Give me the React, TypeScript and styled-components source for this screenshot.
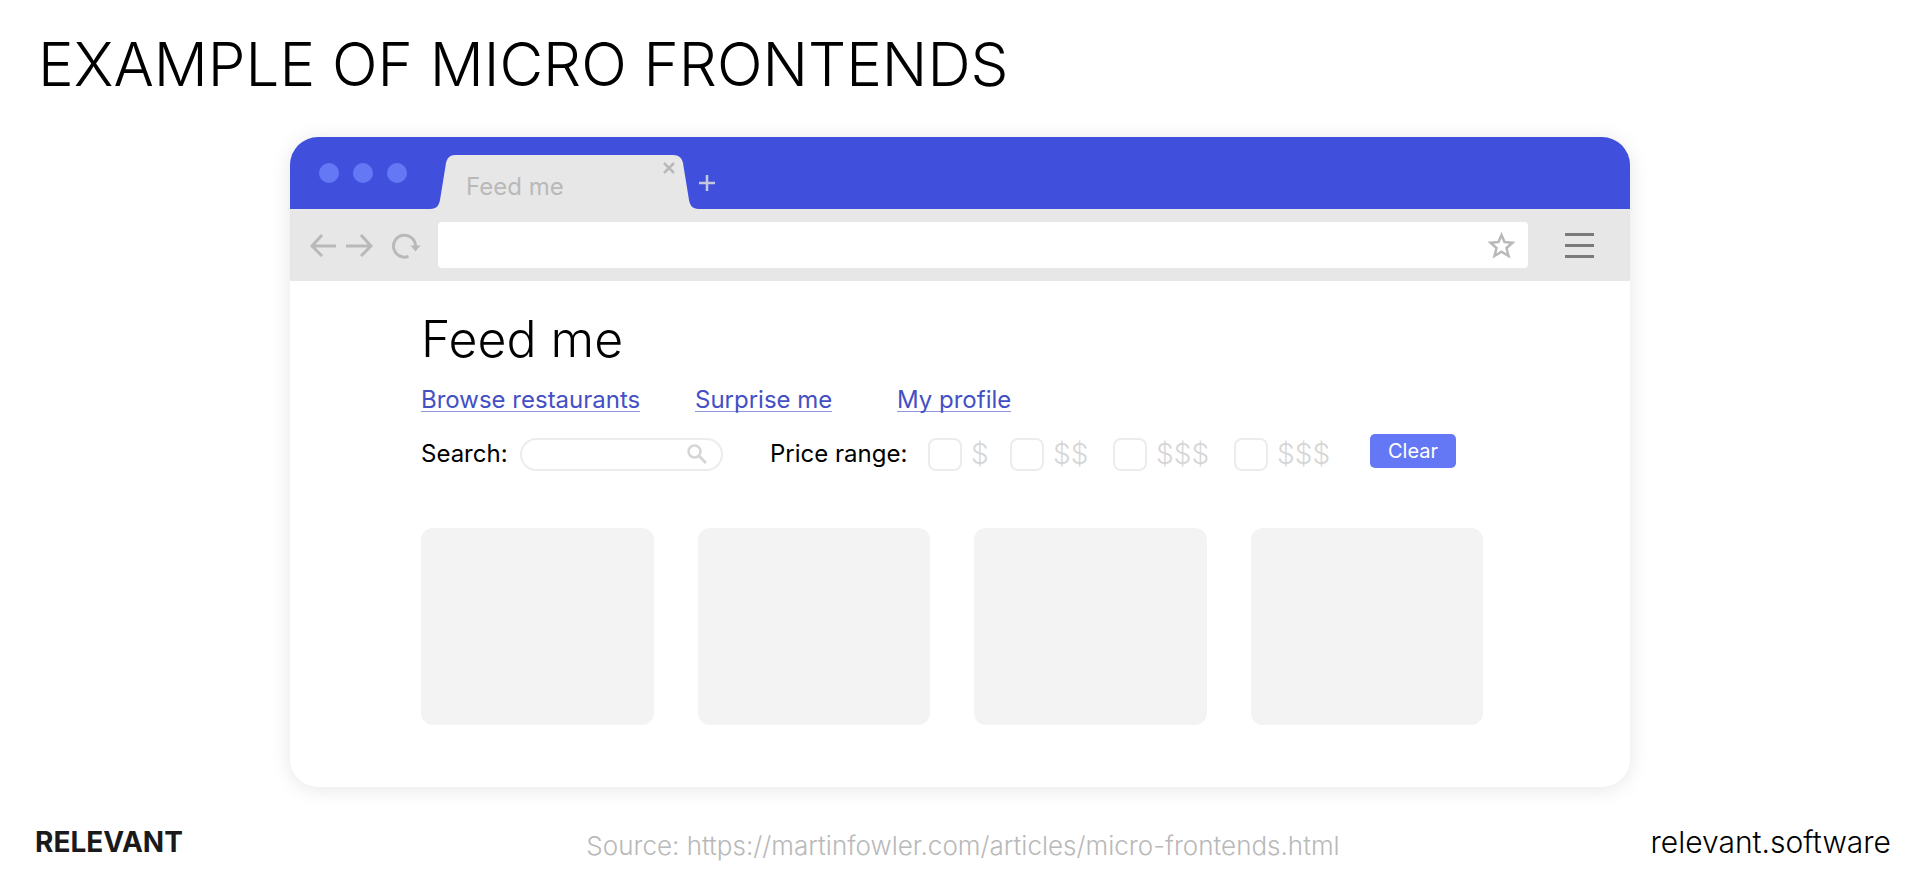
import React from "react";
import styled, { createGlobalStyle } from "styled-components";

const colors = {
  brand: "#404fdc",
  brandLight: "#6478f5",
  chrome: "#e7e7e7",
  muted: "#b9b9b9",
  faint: "#d6d6d6",
  line: "#ececec",
  link: "#4450c4",
  card: "#f3f3f3",
};

const GlobalStyle = createGlobalStyle`
  *, *::before, *::after { box-sizing: border-box; }
  body {
    margin: 0;
    background: #fff;
    color: #000;
    font-family: Inter, "Liberation Sans", sans-serif;
  }
  button, input { font: inherit; margin: 0; }
`;

const Page = styled.div`
  display: flex;
  flex-direction: column;
  min-height: 100vh;
`;

const Title = styled.h1`
  margin: 0;
  padding: 32px 38px 41px;
  font-size: 60px;
  line-height: 64px;
  font-weight: 300;
`;

const Browser = styled.section`
  display: flex;
  flex-direction: column;
  width: calc(100% - 80px);
  max-width: 1340px;
  margin: 0 auto;
  border-radius: 28px;
  background: #fff;
  box-shadow: 0 2px 20px rgba(0, 0, 0, 0.1);
  overflow: hidden;
`;

const TabStrip = styled.div`
  display: flex;
  align-items: flex-end;
  height: 72px;
  padding-left: 29px;
  background: ${colors.brand};
`;

const WindowDots = styled.div`
  display: flex;
  align-self: center;
  gap: 14px;
  margin-right: 23px;
`;

const Dot = styled.span`
  width: 20px;
  height: 20px;
  border-radius: 50%;
  background: ${colors.brandLight};
`;

const Tab = styled.div`
  position: relative;
  display: flex;
  align-items: flex-start;
  justify-content: space-between;
  width: 269px;
  height: 54px;
  padding: 0 20px 0 36px;
`;

const TabShape = styled.svg`
  position: absolute;
  inset: 0;
  fill: ${colors.chrome};
`;

const IconButton = styled.button`
  display: flex;
  flex: none;
  align-items: center;
  justify-content: center;
  padding: 0;
  border: 0;
  background: none;
  color: ${colors.muted};
  position: relative;
  cursor: pointer;

  svg {
    display: block;
    fill: none;
    stroke: currentColor;
  }
`;

const TabLabel = styled(IconButton)`
  height: 62px;
  font-size: 24px;
  font-weight: 400;
`;

const CloseTab = styled(IconButton)`
  width: 20px;
  height: 26px;
`;

const NewTab = styled(IconButton)`
  height: 52px;
  color: #c8c8dc;
`;

const Toolbar = styled.div`
  display: flex;
  align-items: center;
  height: 72px;
  padding: 0 36px 0 19px;
  background: ${colors.chrome};
`;

const NavButtons = styled.div`
  display: flex;
  align-items: center;
  gap: 9px;
  width: 129px;
`;

const AddressBar = styled.div`
  display: flex;
  flex: 1;
  align-items: center;
  height: 46px;
  margin-right: 36px;
  padding-right: 13px;
  border-radius: 4px;
  background: #fff;
`;

const AddressInput = styled.input`
  flex: 1;
  min-width: 0;
  padding: 0 16px;
  border: 0;
  outline: 0;
  background: none;
  font-size: 24px;
`;

const MenuButton = styled(IconButton)`
  color: #7a7a7a;
`;

const Content = styled.main`
  padding: 30px 147px 62px 131px;
`;

const Heading = styled.h2`
  margin: 0;
  font-size: 50px;
  line-height: 56px;
  font-weight: 300;
`;

const Links = styled.nav`
  display: grid;
  grid-template-columns: 274px 202px auto;
  justify-content: start;
  margin-top: 22px;
`;

const NavLink = styled.a`
  justify-self: start;
  border-bottom: 1px solid #8f97dc;
  color: ${colors.link};
  font-size: 24px;
  line-height: 22px;
  font-weight: 400;
  text-decoration: none;
`;

const Filters = styled.form`
  display: flex;
  align-items: center;
  height: 40px;
  margin-top: 22px;
`;

const FilterLabel = styled.label<{ $width: number }>`
  flex: none;
  width: ${(p) => p.$width}px;
  font-size: 24px;
  line-height: 32px;
`;

const SearchBox = styled.div`
  display: flex;
  align-items: center;
  width: 203px;
  height: 33px;
  margin-right: 47px;
  padding-right: 14px;
  border: 2px solid ${colors.line};
  border-radius: 17px;
`;

const SearchInput = styled.input`
  flex: 1;
  min-width: 0;
  padding: 0 12px;
  border: 0;
  outline: 0;
  background: none;
  font-size: 20px;
`;

const PriceGroup = styled.fieldset`
  display: flex;
  align-items: center;
  margin: 0;
  padding: 0;
  border: 0;
`;

const PriceOption = styled.label<{ $width: number }>`
  display: flex;
  align-items: center;
  gap: 9px;
  width: ${(p) => p.$width}px;
  color: ${colors.faint};
  font-size: 28px;
  line-height: 32px;
  font-weight: 300;
`;

const Checkbox = styled.input`
  appearance: none;
  flex: none;
  width: 34px;
  height: 33px;
  border: 2px solid ${colors.line};
  border-radius: 8px;
  background: #fff;

  &:checked {
    background: ${colors.brandLight};
  }
`;

const ClearButton = styled.button`
  align-self: flex-start;
  width: 86px;
  height: 34px;
  padding: 0;
  border: 0;
  border-radius: 5px;
  background: ${colors.brandLight};
  color: #fff;
  font-size: 20px;
  line-height: 32px;
  font-weight: 400;
  cursor: pointer;
`;

const Cards = styled.div`
  display: grid;
  grid-template-columns: repeat(4, 1fr);
  gap: 44px;
  margin-top: 54px;
`;

const Card = styled.article`
  height: 197px;
  border-radius: 12px;
  background: ${colors.card};
`;

const Footer = styled.footer`
  display: grid;
  grid-template-columns: 1fr auto 1fr;
  align-items: center;
  padding: 35px 29px 24px 35px;
`;

const Brand = styled.strong`
  color: #1a1a1a;
  font-size: 28px;
  line-height: 32px;
  font-weight: 700;
`;

const Source = styled.span`
  padding-top: 8px;
  color: ${colors.muted};
  font-size: 26px;
  line-height: 32px;
  font-weight: 300;
`;

const SiteLink = styled.a`
  justify-self: end;
  color: #000;
  font-size: 30px;
  line-height: 32px;
  font-weight: 300;
  text-decoration: none;
`;

const prices = [
  { id: "price-1", label: "$", width: 82 },
  { id: "price-2", label: "$$", width: 103 },
  { id: "price-3", label: "$$$", width: 121 },
  { id: "price-4", label: "$$$", width: 136 },
];

export default function App() {
  return (
    <Page>
      <GlobalStyle />
      <Title>EXAMPLE OF MICRO FRONTENDS</Title>

      <Browser>
        <TabStrip>
          <WindowDots>
            <Dot />
            <Dot />
            <Dot />
          </WindowDots>
          <Tab>
            <TabShape width="269" height="54" viewBox="0 0 269 54" aria-hidden="true">
              <path d="M0 54C7 54 9 50 10 45L16 8C17 3 20 0 25 0H243C249 0 252 3 253 8L259 45C260 50 262 54 269 54Z" />
            </TabShape>
            <TabLabel type="button">Feed me</TabLabel>
            <CloseTab type="button" aria-label="Close tab">
              <svg width="12" height="12" viewBox="0 0 12 12" strokeWidth="2.500">
                <path d="M1 1L11 11M11 1L1 11" />
              </svg>
            </CloseTab>
          </Tab>
          <NewTab type="button" aria-label="New tab">
            <svg width="16" height="16" viewBox="0 0 16 16" strokeWidth="2.500">
              <path d="M8 0V16M0 8H16" />
            </svg>
          </NewTab>
        </TabStrip>

        <Toolbar>
          <NavButtons>
            <IconButton type="button" aria-label="Back">
              <svg width="28" height="24" viewBox="0 0 28 24" strokeWidth="3">
                <path d="M13 2L3 13L13 23M3 13H27" />
              </svg>
            </IconButton>
            <IconButton type="button" aria-label="Forward">
              <svg width="28" height="24" viewBox="0 0 28 24" strokeWidth="3">
                <path d="M15 2L25 13L15 23M25 13H0" />
              </svg>
            </IconButton>
            <IconButton type="button" aria-label="Reload">
              <svg width="42" height="28" viewBox="1 0 42 28" strokeWidth="3">
                <path d="M26.500 25.400A11 11 0 1 1 33.500 15" />
                <path d="M28.500 14.500H38.500L33.500 20.500Z" fill="currentColor" stroke="none" />
              </svg>
            </IconButton>
          </NavButtons>
          <AddressBar>
            <AddressInput type="text" aria-label="Address" />
            <IconButton type="button" aria-label="Bookmark">
              <svg width="28" height="28" viewBox="0 0 28 28" strokeWidth="2.500">
                <path d="M14.500 4L17.500 11L25.500 11.700L19.500 17L21.500 25L14.500 20.800L7.500 25L9.500 17L3.500 11.700L11.500 11Z" />
              </svg>
            </IconButton>
          </AddressBar>
          <MenuButton type="button" aria-label="Menu">
            <svg width="30" height="28" viewBox="0 0 30 28" strokeWidth="3">
              <path d="M1 3.500H30M1 14.500H30M1 25.500H30" />
            </svg>
          </MenuButton>
        </Toolbar>

        <Content>
          <Heading>Feed me</Heading>
          <Links>
            <NavLink href="#browse">Browse restaurants</NavLink>
            <NavLink href="#surprise">Surprise me</NavLink>
            <NavLink href="#profile">My profile</NavLink>
          </Links>
          <Filters>
            <FilterLabel htmlFor="search" $width={99}>
              Search:
            </FilterLabel>
            <SearchBox>
              <SearchInput id="search" type="text" />
              <IconButton type="button" aria-label="Search">
                <svg width="20" height="20" viewBox="0 0 20 20" strokeWidth="2.500" color={colors.faint}>
                  <circle cx="7.500" cy="7.500" r="6" />
                  <path d="M12 12L19 19" strokeWidth="3" />
                </svg>
              </IconButton>
            </SearchBox>
            <FilterLabel as="span" id="price-range" $width={158}>
              Price range:
            </FilterLabel>
            <PriceGroup aria-labelledby="price-range">
              {prices.map((p) => (
                <PriceOption key={p.id} htmlFor={p.id} $width={p.width}>
                  <Checkbox id={p.id} type="checkbox" />
                  {p.label}
                </PriceOption>
              ))}
            </PriceGroup>
            <ClearButton type="reset">Clear</ClearButton>
          </Filters>
          <Cards>
            <Card />
            <Card />
            <Card />
            <Card />
          </Cards>
        </Content>
      </Browser>

      <Footer>
        <Brand>RELEVANT</Brand>
        <Source>Source: https://martinfowler.com/articles/micro-frontends.html</Source>
        <SiteLink href="#relevant">relevant.software</SiteLink>
      </Footer>
    </Page>
  );
}
